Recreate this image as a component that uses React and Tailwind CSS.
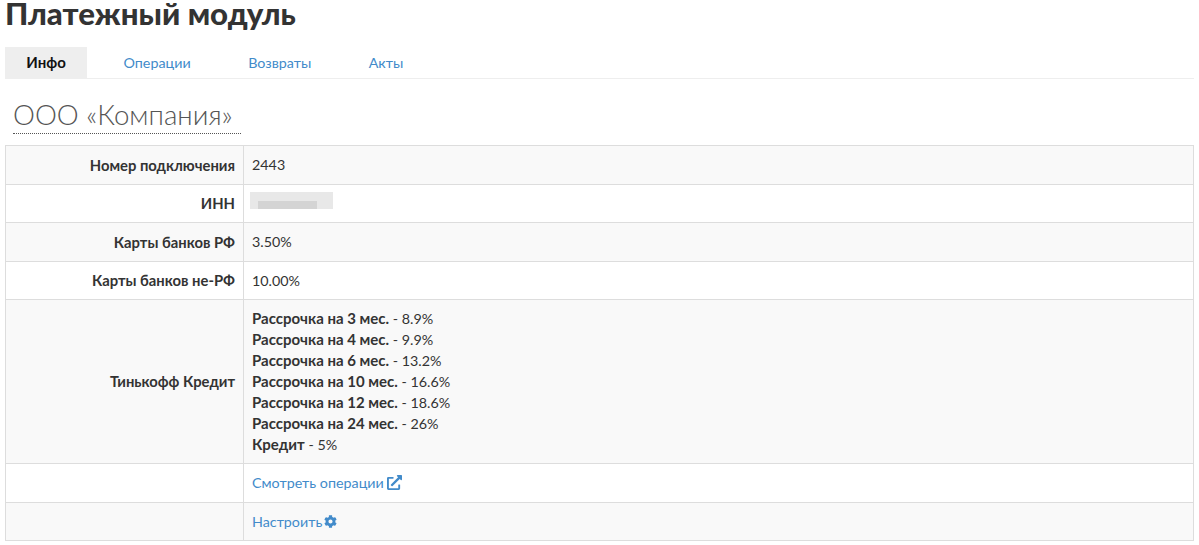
import { FaCog, FaExternalLinkAlt } from 'react-icons/fa';

const credit = [
  ['Рассрочка на 3 мес.', '8.9%'],
  ['Рассрочка на 4 мес.', '9.9%'],
  ['Рассрочка на 6 мес.', '13.2%'],
  ['Рассрочка на 10 мес.', '16.6%'],
  ['Рассрочка на 12 мес.', '18.6%'],
  ['Рассрочка на 24 мес.', '26%'],
  ['Кредит', '5%'],
];

const Row = ({ label, odd, children }) => (
  <div className={`flex border-b border-[#dddddd] ${odd ? 'bg-[#f9f9f9]' : 'bg-white'}`}>
    <div className="w-[238px] shrink-0 flex items-center justify-end pr-[8px] text-[14.8px] font-bold text-[#333333] border-r border-[#dddddd]">
      {label}
    </div>
    <div className="flex-1 px-[8px] py-[8px] min-h-[37.5px] leading-[21px]">{children}</div>
  </div>
);

const App = () => {
  const tabs = ['Операции', 'Возвраты', 'Акты'];

  return (
    <div className="h-[545px] overflow-hidden bg-white px-[5px] text-[14.3px] text-[#333333] font-['Lato',sans-serif]">
      <h1 className="text-[31.2px] leading-[26px] font-black m-0 text-[#333333]">Платежный модуль</h1>
      <div className="flex mt-[21px] h-[32px] border-b border-[#eeeeee] gap-[15.5px]">
        <div className="w-[82px] h-[31px] bg-[#eeeeee] flex items-center justify-center font-bold text-[#111111] text-[15px]">
          Инфо
        </div>
        {tabs.map((t) => (
          <a key={t} className="px-[21px] h-[31px] flex items-center text-[#428bca] text-[14.3px]">
            {t}
          </a>
        ))}
      </div>
      <div className="pl-[8px] mt-[18px] h-[36px]">
        <span className="inline-block pr-[8px] text-[27.7px] leading-[36px] font-light text-[#555555] border-b border-dotted border-[#555555]">
          ООО «Компания»
        </span>
      </div>
      <div className="mt-[12px] border border-b-0 border-[#dddddd]">
        <Row label="Номер подключения" odd>2443</Row>
        <Row label="ИНН">
          <div className="w-[83px] h-[17px] -ml-[2px] -mt-[1px] bg-[#e8e8e8] flex items-end">
            <div className="ml-[8px] w-[59px] h-[8px] bg-[#d4d4d4]" />
          </div>
        </Row>
        <Row label="Карты банков РФ" odd>3.50%</Row>
        <Row label="Карты банков не-РФ">10.00%</Row>
        <Row label="Тинькофф Кредит" odd>
          {credit.map(([name, rate]) => (
            <div key={name}>
              <b className="text-[15px]">{name}</b> - {rate}
            </div>
          ))}
        </Row>
        <Row label="">
          <a className="text-[#428bca] inline-flex items-center gap-[3px]">
            Смотреть операции
            <FaExternalLinkAlt size={15} />
          </a>
        </Row>
        <Row label="" odd>
          <a className="text-[#428bca] inline-flex items-center gap-[2px]">
            Настроить
            <FaCog size={13} />
          </a>
        </Row>
      </div>
    </div>
  );
};

export default App;
